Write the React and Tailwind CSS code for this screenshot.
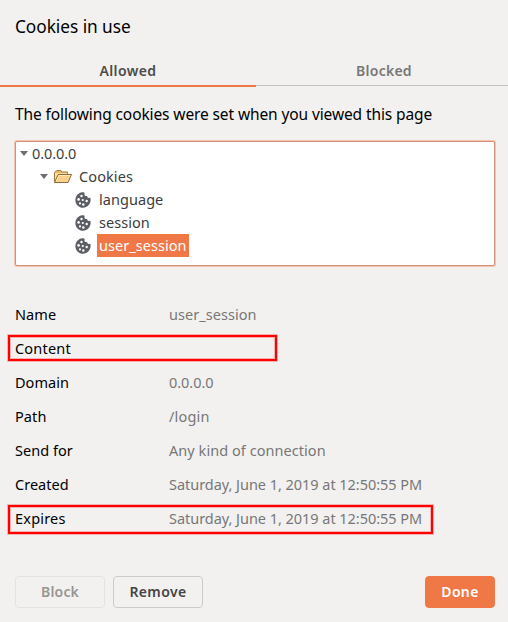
import React from "react";

function Cookie() {
  return (
    <svg width="16" height="16" viewBox="0 0 16 16" className="shrink-0">
      <path
        fill="#5b5e64"
        d="M7.3.3C8.6.1 9.2.2 9.5.8c.2.9-.3 1.900.3 2.700.6.8 1.500.5 2.200.6.4.8.4 1.600 1.300 1.900.8.2 1.300-.4 2-.1.4.6.4 1.500.3 2.700-.4 4-3.500 7-7.400 7.200C4 15.800.4 12.500.4 8.200.3 4.100 3.400.8 7.300.3z"
      />
      <g fill="#fff">
        <circle cx="6.500" cy="4" r="1.200" />
        <circle cx="3.600" cy="7.400" r="1.300" />
        <circle cx="7.800" cy="8" r="1.100" />
        <circle cx="11.700" cy="9" r="1.200" />
        <circle cx="5" cy="11.400" r="1.050" />
        <circle cx="8.300" cy="12.400" r="1.250" />
      </g>
    </svg>
  );
}

function Folder() {
  return (
    <svg width="20" height="16" viewBox="0 0 20 16" className="shrink-0">
      <path fill="#e8b765" stroke="#a57c42" d="M1.500 13.500V3.500l1-1h.500l.800-1h4l1 1.500h5.700v2.500" />
      <path fill="#fbdf9f" d="M2 4h12v2H4.500L2 12z" />
      <path fill="#fbd08a" stroke="#8f6b3c" strokeLinejoin="round" d="M1.500 13.500L5.200 5.500h13.300L15 13.500z" />
      <path fill="none" stroke="#ffe9bc" d="M3 12.500l3-6h11" />
    </svg>
  );
}

function Arrow() {
  return (
    <svg width="8" height="5" viewBox="0 0 8 5" className="shrink-0">
      <path fill="#6f6f6f" d="M0 0h8L4 5z" />
    </svg>
  );
}

const details = [
  ["Name", "tracking-[0.1px]", "user_session", "tracking-[0.05px]"],
  ["Content", "tracking-[0.2px]", "", ""],
  ["Domain", "tracking-[0.02px]", "0.0.0.0", "tracking-[-0.05px]"],
  ["Path", "tracking-[0.1px]", "/login", "tracking-[0.2px]"],
  ["Send for", "tracking-[0.02px]", "Any kind of connection", "tracking-[0.05px]"],
  ["Created", "tracking-[0.02px]", "Saturday, June 1, 2019 at 12:50:55 PM", "tracking-[-0.04px]"],
  ["Expires", "tracking-[0.2px]", "Saturday, June 1, 2019 at 12:50:55 PM", "tracking-[-0.04px]"],
];

export default function App() {
  return (
    <div className="relative flex h-[622px] w-[508px] flex-col overflow-hidden bg-[#f2f1ef] font-['Noto_Sans',sans-serif] text-[14.5px] whitespace-nowrap text-black">
      <h1 className="mt-[15px] ml-[15px] h-6 text-[17.300px] leading-6 tracking-[-0.05px]">Cookies in use</h1>
      <div className="mt-[17px] flex h-[31px] text-[14px] leading-[30px] font-semibold">
        <div className="w-64 border-b-2 border-[#ee7947] text-center tracking-[0.4px] text-[#4c4c4c]">Allowed</div>
        <div className="mb-px flex-1 border-b border-[#c5c3bf] pl-1 text-center tracking-[0.25px] text-[#777]">Blocked</div>
      </div>
      <p className="mt-[15px] ml-[15px] h-6 text-[15.500px] leading-6 tracking-[-0.11px]">
        The following cookies were set when you viewed this page
      </p>
      <div className="mt-[15px] mr-[13px] mb-px ml-[15px] flex h-[125px] flex-col rounded-[2px] border border-[#d4917a] bg-white text-[#3c3c3c] shadow-[0_0_0_1px_#f4c3b0]">
        <div className="flex h-[23px] items-center pl-1"><Arrow /><span className="ml-1 tracking-[-0.1px]">0.0.0.0</span></div>
        <div className="flex h-[23px] items-center pl-6"><Arrow /><span className="ml-[5px]"><Folder /></span><span className="ml-1.5 tracking-[0.1px]">Cookies</span></div>
        <div className="flex h-[23px] items-center pl-[59px]"><Cookie /><span className="ml-2 tracking-[0.05px]">language</span></div>
        <div className="flex h-[23px] items-center pl-[59px]"><Cookie /><span className="ml-2 tracking-[0.05px]">session</span></div>
        <div className="flex h-[23px] items-center pl-[59px]"><Cookie /><span className="ml-1.5 h-[23px] w-[92px] bg-[#f07746] pl-0.5 leading-[23px] tracking-[0.05px] text-white">user_session</span></div>
      </div>
      <dl className="mt-[31px] ml-[15px]">
        {details.map(([name, nameTracking, value, valueTracking]) => (
          <div key={name} className="flex h-[34px] items-center">
            <dt className="w-[154px]"><span className={nameTracking}>{name}</span></dt>
            <dd className="text-[#777]"><span className={valueTracking}>{value}</span></dd>
          </div>
        ))}
      </dl>
      <div className="mt-10 flex h-8 pr-[13px] pl-[15px] text-[14px] leading-[30px] font-semibold">
        <button className="w-[90px] rounded-[4px] border border-[#e5e3e1] tracking-[0.2px] text-[#979592]">Block</button>
        <button className="ml-2 w-[90px] rounded-[4px] border border-[#cdcbc8] tracking-[0.4px] text-[#444]">Remove</button>
        <button className="ml-auto w-[70px] rounded-[4px] border border-[#f07746] bg-[#f07746] tracking-[0.35px] text-white">Done</button>
      </div>
      <div className="absolute top-[335px] left-2 h-[26px] w-[269px] border-2 border-[#f00] shadow-[0_0_0_1px_#ff000040,inset_0_0_0_1px_#ff000040]" />
      <div className="absolute top-[505px] left-2 h-[29px] w-[425px] border-2 border-[#f00] shadow-[0_0_0_1px_#ff000040,inset_0_0_0_1px_#ff000040]" />
    </div>
  );
}
